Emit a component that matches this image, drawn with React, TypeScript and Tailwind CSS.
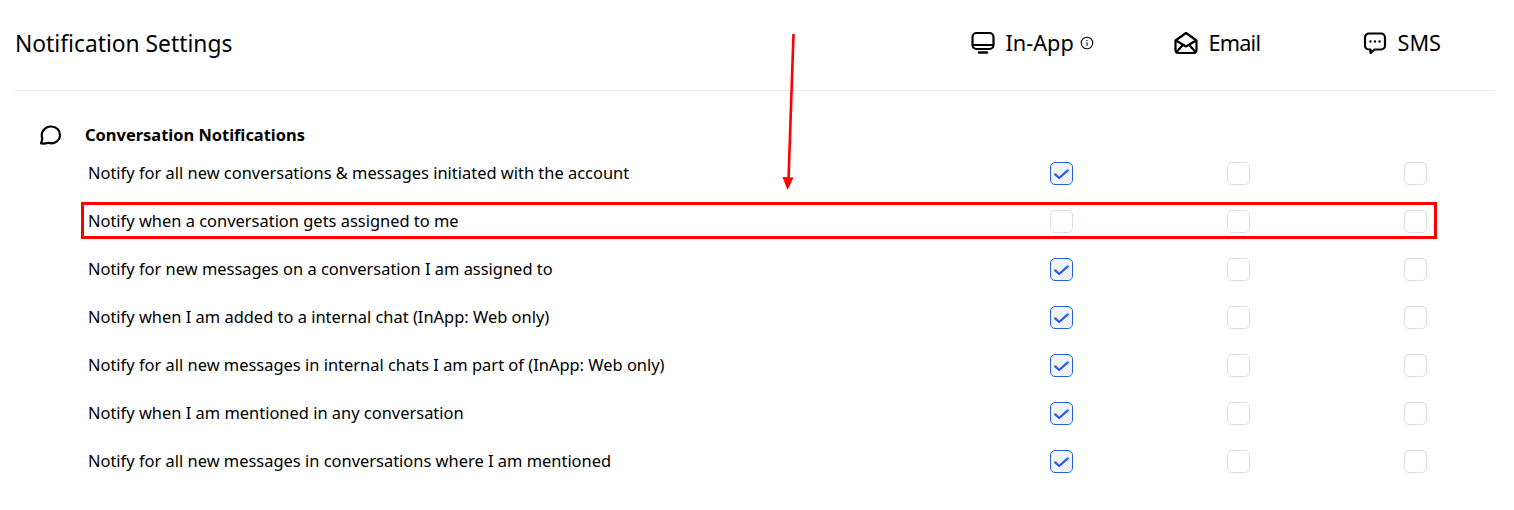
import React from "react";

const rows: [string, boolean][] = [
  ["Notify for all new conversations & messages initiated with the account", true],
  ["Notify when a conversation gets assigned to me", false],
  ["Notify for new messages on a conversation I am assigned to", true],
  ["Notify when I am added to a internal chat (InApp: Web only)", true],
  ["Notify for all new messages in internal chats I am part of (InApp: Web only)", true],
  ["Notify when I am mentioned in any conversation", true],
  ["Notify for all new messages in conversations where I am mentioned", true],
];

function Box({ on }: { on?: boolean }) {
  return on ? (
    <div className="w-[23px] h-[23px] rounded-[5px] border border-[#2563eb] bg-[#f1f3f9] flex items-center justify-center">
      <svg width="17" height="17" viewBox="0 0 17 17" fill="none">
        <path d="M2.2 9.4 L6.2 13 L14.8 5.4" stroke="#2563eb" strokeWidth="2.3" strokeLinecap="round" strokeLinejoin="round" />
      </svg>
    </div>
  ) : (
    <div className="w-[23px] h-[23px] rounded-[5px] border border-[#d9dde6] bg-white" />
  );
}

export default function App() {
  return (
    <div className="relative w-[1514px] h-[510px] bg-white text-black overflow-hidden font-['Noto_Sans',sans-serif]">
      <div className="ml-[15px] w-[1479px] h-[91px] border-b border-[#ebebeb] flex items-start">
        <h1 className="mt-[27px] text-[22.8px] leading-[34px] font-normal flex-1">Notification Settings</h1>
        <div className="flex mt-[26px] h-[34px] text-[21.7px] leading-[34px] mr-[53px]">
          <div className="w-[203px] flex items-center">
            <svg width="24" height="24" viewBox="0 0 24 24" fill="none" stroke="#000" strokeWidth="2.2" strokeLinecap="round" strokeLinejoin="round">
              <rect x="1.5" y="2" width="21" height="16" rx="4" />
              <path d="M2 14h20" />
              <path d="M8 21.5h8" strokeWidth="2.4" />
            </svg>
            <span className="ml-[11px]">In-App</span>
            <svg className="ml-[6px]" width="14" height="14" viewBox="0 0 14 14" fill="none" stroke="#000" strokeWidth="1.1">
              <circle cx="7" cy="7" r="5.8" />
              <path d="M7 6.3v3.4M7 4.1v.9" />
            </svg>
          </div>
          <div className="w-[189px] flex items-center">
            <svg width="24" height="24" viewBox="0 0 24 24" fill="none" stroke="#000" strokeWidth="2.2" strokeLinecap="round" strokeLinejoin="round">
              <path d="M1.5 9.5 L12 2 L22.5 9.5 V19 a3 3 0 0 1 -3 3 H4.5 a3 3 0 0 1 -3 -3 Z" />
              <path d="M2 9.5 L12 15.5 L22 9.5" />
              <path d="M2.5 21 L9 13.8 M21.5 21 L15 13.8" />
            </svg>
            <span className="ml-[11px] tracking-[-0.8px]">Email</span>
          </div>
          <div className="flex items-center">
            <svg width="24" height="24" viewBox="0 0 24 24" fill="none" stroke="#000" strokeWidth="2.2" strokeLinecap="round" strokeLinejoin="round">
              <path d="M6 2.5 H18 a4 4 0 0 1 4 4 V14.5 a4 4 0 0 1 -4 4 H11.5 L7.5 22 V18.5 H6 a4 4 0 0 1 -4 -4 V6.5 a4 4 0 0 1 4 -4 Z" />
              <path d="M7.5 10.5h.01M12 10.5h.01M16.5 10.5h.01" strokeWidth="2.4" />
            </svg>
            <span className="ml-[11px]">SMS</span>
          </div>
        </div>
      </div>

      <div className="flex items-center ml-[39px] mt-[32px] h-[24px]">
        <svg width="23" height="22" viewBox="0 0 23 22" fill="none" stroke="#000" strokeWidth="2.2" strokeLinecap="round" strokeLinejoin="round">
          <path d="M2 19.5 L3.4 14.8 C1 9 5.5 2.5 12 2.5 C17.5 2.5 21 6.5 21 11 C21 16.5 15.5 20.8 9.5 18.8 C7 19.6 4.5 19.8 2 19.5 Z" />
        </svg>
        <span className="ml-[23px] text-[16.45px] font-bold leading-[24px]">Conversation Notifications</span>
      </div>

      <div className="mt-[2px]">
        {rows.map(([label, on]) => (
          <div key={label} className="flex items-center h-[48px] pl-[88px]">
            <span className="text-[16.45px] leading-[24px] flex-1">{label}</span>
            <div className="flex mr-[87px] gap-[154px]">
              <Box on={on} />
              <Box />
              <Box />
            </div>
          </div>
        ))}
      </div>

      <div className="absolute left-[81px] top-[202px] w-[1356px] h-[37px] border-[3px] border-[#fe0000]" />
      <svg className="absolute left-[770px] top-[30px]" width="40" height="165" viewBox="0 0 40 165" fill="none">
        <path d="M23.5 4 L18.5 150" stroke="#fe0000" strokeWidth="2.6" />
        <path d="M12.5 147 L23.5 147.5 L17.5 160 Z" fill="#fe0000" />
      </svg>
    </div>
  );
}
